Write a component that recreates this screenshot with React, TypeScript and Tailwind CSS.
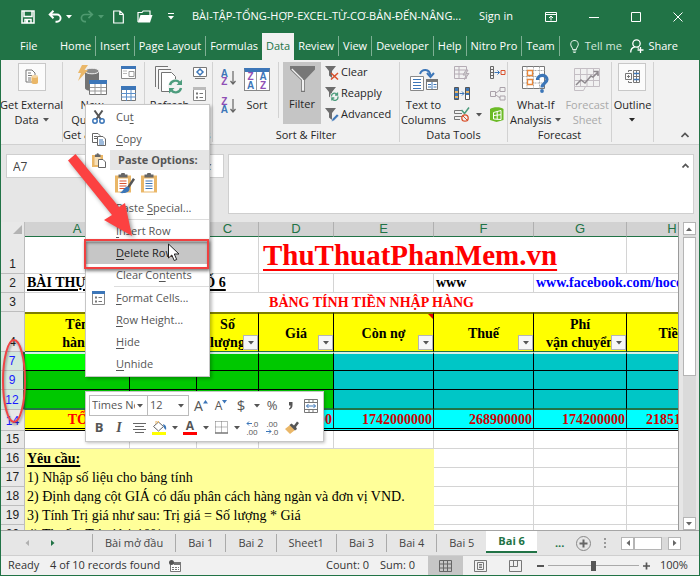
import React from 'react';
import clsx from 'clsx';

const CaretDown = ({ className = 'text-[#555]' }: { className?: string }) => (
  <svg width="6" height="4" viewBox="0 0 6 4" className={clsx('shrink-0', className)}>
    <path d="M0 0h6L3 3.5z" fill="currentColor" />
  </svg>
);

const Underlined = ({ text, at }: { text: string; at: number }) => (
  <span>
    {text.slice(0, at)}
    <span className="underline underline-offset-2">{text[at]}</span>
    {text.slice(at + 1)}
  </span>
);

/* ---------- Title bar ---------- */

const TitleBar = () => (
  <header className="flex h-[31px] shrink-0 items-center pl-5 text-[11px] text-white">
    <div className="flex w-[171px] shrink-0 items-center">
      <button aria-label="Save" className="w-[27px]">
        <svg width="14" height="14" viewBox="0 0 14 14" fill="none" stroke="currentColor" strokeWidth="1.5">
          <path d="M1 1h12v12H1zM3 1v5.5h8V1M4 13V9.500h6V13" />
          <path d="M5 10h2v3H5z" fill="currentColor" stroke="none" />
        </svg>
      </button>
      <button aria-label="Undo" className="flex w-8 items-center gap-1">
        <svg width="14" height="13" viewBox="0 0 14 13" fill="none" stroke="currentColor" strokeWidth="1.9">
          <path d="M1.500 4.500H9a3.600 3.600 0 0 1 0 7.200H7.500M5.500 .8 1.700 4.500l3.800 3.700" />
        </svg>
        <CaretDown className="text-white" />
      </button>
      <button aria-label="Redo" className="flex w-[33px] items-center gap-1 text-[#4f9a70]">
        <svg width="14" height="13" viewBox="0 0 14 13" fill="none" stroke="currentColor" strokeWidth="1.700">
          <path d="M12.500 4.500H5a3.600 3.600 0 0 0 0 7.200h1M8.500 .8l3.800 3.700-3.800 3.700" />
        </svg>
        <CaretDown className="text-[#4f9a70]" />
      </button>
      <button aria-label="New" className="w-6">
        <svg width="11" height="14" viewBox="0 0 11 14" fill="none" stroke="currentColor" strokeWidth="1.200">
          <path d="M.7 1H7l3.300 3.300V13H.7zM6.800 1v3.500h3.500" />
        </svg>
      </button>
      <button aria-label="Open" className="w-[31px]">
        <svg width="16" height="13" viewBox="0 0 16 13">
          <path d="M1 12V2.500h4l1.200-1.500H13v4" fill="none" stroke="currentColor" strokeWidth="1.200" />
          <path d="M3.500 5h12L13 12.500H.8z" fill="currentColor" />
        </svg>
      </button>
      <button aria-label="Customize Quick Access Toolbar">
        <svg width="6" height="7" viewBox="0 0 6 7" fill="currentColor">
          <path d="M0 0h6v1H0zM0 3h6L3 6.500z" />
        </svg>
      </button>
    </div>
    <h1 className="min-w-0 flex-1 whitespace-nowrap">BÀI-TẬP-TỔNG-HỢP-EXCEL-TỪ-CƠ-BẢN-ĐẾN-NÂNG...</h1>
    <button className="w-[66px] shrink-0 text-left">Sign in</button>
    <div className="flex w-[154px] shrink-0 items-center justify-between pr-4">
      <button aria-label="Ribbon Display Options">
        <svg width="12" height="10" viewBox="0 0 12 10" fill="none" stroke="currentColor">
          <path d="M.5.5h11v9H.5zM.5 2.500h11M6 8.500V4M4 6l2-2 2 2" />
        </svg>
      </button>
      <button aria-label="Minimize">
        <svg width="10" height="10" viewBox="0 0 10 10" stroke="currentColor"><path d="M0 5.500h10" /></svg>
      </button>
      <button aria-label="Maximize">
        <svg width="10" height="10" viewBox="0 0 10 10" fill="none" stroke="currentColor"><path d="M.5.5h9v9h-9z" /></svg>
      </button>
      <button aria-label="Close">
        <svg width="10" height="10" viewBox="0 0 10 10" stroke="currentColor"><path d="m.5.5 9 9m0-9-9 9" /></svg>
      </button>
    </div>
  </header>
);

const ribbonTabs = ['Home', 'Insert', 'Page Layout', 'Formulas', 'Data', 'Review', 'View', 'Developer', 'Help', 'Nitro Pro', 'Team'];

const RibbonTabs = () => (
  <nav className="flex h-7 shrink-0 items-center text-[11px] text-white">
    <button className="w-[55px] shrink-0 pl-[19px] text-left">File</button>
    {ribbonTabs.map((tab) => (
      <button
        key={tab}
        className={clsx(
          'shrink-0 whitespace-nowrap px-1',
          tab === 'Data' ? 'mt-auto h-[27px] bg-[#f1f1f1] text-[#217346]' : 'h-5 border-[#7fb094]',
          tab !== 'Data' && tab !== 'Formulas' && 'border-r'
        )}
      >
        {tab}
      </button>
    ))}
    <button className="ml-2.5 flex shrink-0 items-center gap-1.5 text-[#d5e8dd]">
      <svg width="9" height="13" viewBox="0 0 9 13" fill="none" stroke="currentColor" strokeWidth="1.100">
        <path d="M2.800 9.500C2.800 7.500.7 6.800.7 4.300a3.800 3.800 0 0 1 7.600 0c0 2.500-2.100 3.200-2.100 5.200zM2.800 11h3.400M3.300 12.500h2.400" />
      </svg>
      Tell me
    </button>
    <button className="ml-auto mr-[21px] flex shrink-0 items-center gap-1">
      <svg width="14" height="14" viewBox="0 0 14 14" fill="none" stroke="currentColor" strokeWidth="1.300">
        <circle cx="6.500" cy="4.500" r="3.700" />
        <path d="M.7 13.500c0-3 1.500-5 4-5.500M7.500 8.500l1.500 1M10.500 8v6M7.500 11h6" />
      </svg>
      Share
    </button>
  </nav>
);

/* ---------- Ribbon icons ---------- */

const ExternalDataIcon = () => (
  <svg width="14" height="16" viewBox="0 0 14 16">
    <path d="M1 1h6l3 3v9H1z" fill="#fff" stroke="#777" />
    <path d="M3 4h3M3 6.500h4M3 9h3M3 11h3" stroke="#777" />
    <path d="M6.500 7.500v6c0 2 6.500 2 6.500 0v-6z" fill="#eab768" />
    <ellipse cx="9.750" cy="7.500" rx="3.250" ry="1.400" fill="#f5d6a3" />
  </svg>
);

const NewQueryIcon = () => (
  <svg width="30" height="30" viewBox="0 0 30 30">
    <path d="M8 6v17c0 4 14 4 14 0V6z" fill="#737373" />
    <ellipse cx="15" cy="6" rx="7" ry="2.800" fill="#8b8b8b" stroke="#f1f1f1" />
    <path d="M5 0h6L7.500 5H11L1 16l3-8H1z" fill="#eab768" />
    <path d="M12.500 15.500h17v14h-17z" fill="#fff" stroke="#777" />
    <path d="M12 15h18v4H12z" fill="#3c76b8" />
    <path d="M18 19v10.500M24 19v10.500M13 22.500h16M13 26h16" stroke="#999" />
  </svg>
);

const RefreshAllIcon = () => (
  <svg width="28" height="28" viewBox="0 0 28 28" fill="#f8f8f8" stroke="#737373">
    <path d="M.5 21V.5H13" />
    <path d="M3.500 23V3.500H16" />
    <path d="M6.500 25.500v-19h10l4 4v15z" fill="#fff" />
    <circle cx="20.500" cy="20.500" r="7.500" fill="#f1f1f1" stroke="none" />
    <path d="M15 19a5.500 5.500 0 0 1 9.500-2.500M26 22a5.500 5.500 0 0 1-9.500 2.500" fill="none" stroke="#4d9c7d" strokeWidth="2.400" />
    <path d="M27 13.500V19h-5.500zM14 27.500V22h5.500z" fill="#4d9c7d" stroke="none" />
  </svg>
);

const QueriesIcon = () => (
  <svg width="15" height="13" viewBox="0 0 15 13">
    <path d="M.5.5h14v12H.5z" fill="#fff" stroke="#888" />
    <path d="M0 0h15v3H0z" fill="#3c76b8" />
    <path d="M2 5h4M2 7.500h4" stroke="#bbb" />
    <path d="M8 5.500h5v5H8z" fill="#fff" stroke="#999" />
  </svg>
);

const FromTableIcon = () => (
  <svg width="15" height="15" viewBox="0 0 15 15">
    <path d="M.5.5h14v14H.5z" fill="#fff" stroke="#777" />
    <path d="M0 0h15v4H0z" fill="#3c76b8" />
    <path d="M5.500 4v11M10 4v11M0 7.500h15M0 11h15" stroke="#5b8fc9" />
  </svg>
);

const ConnectionsIcon = () => (
  <svg width="14" height="12" viewBox="0 0 14 12" fill="none" stroke="#777">
    <path d="M.5.5h13v9H.5zM2 11.500h10" fill="#fff" />
    <path d="m7 2 3 3-3 3-3-3z" stroke="#3c76b8" strokeWidth="1.500" />
  </svg>
);

const PropertiesIcon = ({ bar = '#888' }: { bar?: string }) => (
  <svg width="13" height="14" viewBox="0 0 13 14">
    <path d="M.5.5h12v13H.5z" fill="#fff" stroke="#888" />
    <path d="M0 0h13v3H0z" fill={bar} />
    <path d="M3 5.500h2v2H3zM3 9.500h2v2H3z" fill="#777" />
    <path d="M6.500 6.500H10M6.500 10.500H10" stroke="#777" />
  </svg>
);

// Small sort button: the two letters are text, only the arrow is drawn
const SortButton = ({ letters, label }: { letters: [string, string]; label: string }) => (
  <button aria-label={label} className="flex items-center gap-0.5 text-[10px] font-bold leading-[8px]">
    <span className="flex flex-col font-['Liberation_Sans',sans-serif]">
      <span className={letters[0] === 'A' ? 'text-[#3c76b8]' : 'text-[#8f4fb5]'}>{letters[0]}</span>
      <span className={letters[1] === 'A' ? 'text-[#3c76b8]' : 'text-[#8f4fb5]'}>{letters[1]}</span>
    </span>
    <svg width="6" height="14" viewBox="0 0 6 14" fill="none" stroke="#666" strokeWidth="1.200">
      <path d="M3 0v13M.5 10 3 13l2.500-3" />
    </svg>
  </button>
);

const Funnel = ({ children }: { children: React.ReactNode }) => (
  <svg width="14" height="14" viewBox="0 0 14 14">
    <path d="M0 0h11L7 5v7L4 9.500V5z" fill="#6d6d6d" />
    {children}
  </svg>
);

const FilterIcon = () => (
  <svg width="25" height="26" viewBox="0 0 25 26">
    <path d="M0 0h25v3.500L15 14v12h-4V14L0 3.500z" fill="#777" />
    <path d="M1.800 3 12.500 13.500V24h1V14" fill="none" stroke="#f1f1f1" strokeWidth="1.300" />
  </svg>
);

const TextToColumnsIcon = () => (
  <svg width="28" height="24" viewBox="0 0 28 24">
    <path d="M.5 8.500h13v14H.5z" fill="#fff" stroke="#888" />
    <path d="M3 11.500h8M3 14.500h8M3 17.500h8M3 20.500h8" stroke="#3c76b8" />
    <path d="M16.500 11.500h11v10h-11z" fill="#fff" stroke="#777" />
    <path d="M16 11h12v3H16z" fill="#777" />
    <path d="M22 14v7M18 16.500h3M18 19h3M23.500 16.500h3M23.500 19h3" stroke="#3c76b8" />
    <path d="M10 6c2-5.500 9.500-5.500 10.500 1.500" fill="none" stroke="#3c76b8" strokeWidth="2" />
    <path d="m17 5 3.500 4L24 5" fill="none" stroke="#3c76b8" strokeWidth="2" />
  </svg>
);

const FlashFillIcon = () => (
  <svg width="16" height="14" viewBox="0 0 16 14" fill="none" stroke="#b5acb5">
    <path d="M.5.5h12v12H.5zM.5 4h12M.5 8h12M5 .5v12" />
    <path d="m12 4-3 5h3l-1.500 4.500L15 7.500h-3L14 4z" fill="#ccc" />
  </svg>
);

const RemoveDuplicatesIcon = () => (
  <svg width="16" height="13" viewBox="0 0 16 13">
    <path d="M.5.5h4v12h-4zM11.500.5h4v12h-4z" fill="#3c76b8" stroke="#555" />
    <path d="M1 4h3v2H1zM1 9h3v2H1zM12 4h3v2h-3z" fill="#eab768" />
    <path d="M12 8h3v4h-3z" fill="#fff" />
    <path d="M5.500 6.500H10M8 4.500l2 2-2 2" fill="none" stroke="#3c76b8" />
  </svg>
);

const ValidationIcon = () => (
  <svg width="16" height="15" viewBox="0 0 16 15" fill="none" stroke="#777">
    <path d="M8 3.500H.5v3H8M8 9.500H.5v3H6" />
    <path d="m7.500 3 3 3.500L15 .5" stroke="#4d9c7d" strokeWidth="1.500" />
    <circle cx="11" cy="11" r="3.200" stroke="#d9512c" strokeWidth="1.300" />
    <path d="m9 9 4 4" stroke="#d9512c" />
  </svg>
);

const ConsolidateIcon = () => (
  <svg width="16" height="13" viewBox="0 0 16 13" fill="none" stroke="#666">
    <path d="M.5.5h3v12h-3zM.5 3.500h3M.5 6.500h3M.5 9.500h3" />
    <path d="M4.500 6.500h5M7.500 4.500l2 2-2 2" stroke="#3c76b8" />
    <path d="M11 4.500h4v4h-4z" stroke="#d9512c" />
  </svg>
);

const RelationshipsIcon = () => (
  <svg width="16" height="14" viewBox="0 0 16 14" fill="none" stroke="#aaa2aa">
    <path d="M.5 4.500h5v5h-5zM10 .5h5v4h-5zM10 9h5v4h-5zM6 6l4-3M6 8l4 3" />
  </svg>
);

const DataModelIcon = () => (
  <svg width="14" height="15" viewBox="0 0 14 15">
    <path d="M0 2c3-2.500 11-2.500 13.500 0v11l-7 2L0 13z" fill="#6cbb27" />
    <path d="M3.500 5.500 11 3.500v9l-7.500-.5zM3.500 8.500l7.500-.8M7.200 4.500v8" fill="none" stroke="#fff" />
  </svg>
);

const WhatIfIcon = () => (
  <svg width="27" height="27" viewBox="0 0 27 27">
    <path d="M.5.5h22v22H.5z" fill="#fff" stroke="#777" />
    <path d="M5 .5v22M11.500 .5v22M17.500 .5v22M.5 4.500h22M.5 10.500h22M.5 17h22" stroke="#aaa" strokeDasharray="2 1" />
    <path d="M5.500 4.500h5v5h-5zM5.500 13.500h5v5h-5z" fill="#fff" stroke="#e8873a" strokeWidth="1.300" />
    <path d="M15.500 14c0-6 9.500-6 9.500-.5 0 3.500-5 3.500-5 8" fill="none" stroke="#3c76b8" strokeWidth="3.200" />
    <circle cx="20" cy="25" r="1.900" fill="#3c76b8" />
  </svg>
);

const ForecastIcon = () => (
  <svg width="26" height="24" viewBox="0 0 26 24" fill="none" stroke="#c4bec4">
    <path d="M.5.5h25v18H.5zM6.500 .5v18M13 .5v18M19.500 .5v18M.5 6.500h25M.5 12.500h25M.5 18.500v4h9l2-4" />
    <path d="M2 17l5-5 4 3 6-7 2 1 5-5M19.500 3.500H24V8" stroke="#8e898e" strokeWidth="1.500" />
  </svg>
);

const OutlineIcon = () => (
  <svg width="15" height="13" viewBox="0 0 15 13" fill="none" stroke="#777">
    <path d="M.5 3.500h6v6h-6zM2 6.500h3M3.500 5v3M3.500 2V.5H7M3.500 11v1.500H7" />
    <path d="M8.500.5h6v12h-6zM11.500 .5v12M8.500 6.500h6" fill="#fff" />
    <path d="M9 3.500h5M9 9.500h5" stroke="#3c76b8" strokeWidth="1.500" />
  </svg>
);

/* ---------- Ribbon ---------- */

interface GroupProps {
  label?: string;
  className: string;
  children: React.ReactNode;
}

const Group = ({ label, className, children }: GroupProps) => (
  <section className={clsx('flex shrink-0 flex-col border-r border-[#d2d2d2]', className)}>
    <div className="flex flex-1 justify-center">{children}</div>
    {label && <div className="whitespace-nowrap text-center leading-[14px]">{label}</div>}
  </section>
);

const BigButton = ({ icon, lines, caret, className }: { icon: React.ReactNode; lines: string[]; caret?: boolean; className?: string }) => (
  <button className={clsx('flex flex-col items-center whitespace-nowrap leading-[15px]', className)}>
    <span className="flex h-[35px] items-center">{icon}</span>
    {lines.map((line, i) => (
      <span key={line} className="flex items-center gap-1">
        {line}
        {caret && i === lines.length - 1 && <CaretDown />}
      </span>
    ))}
  </button>
);

const FramedIcon = ({ children }: { children: React.ReactNode }) => (
  <span className="mb-1.5 flex size-7 items-center justify-center border border-[#c8c8c8] bg-[#fbfbfb]">{children}</span>
);

const SmallColumn = ({ children }: { children: React.ReactNode }) => (
  <div className="flex flex-col [&>*]:h-[21px]">{children}</div>
);

const IconButton = ({ label, children }: { label: string; children: React.ReactNode }) => (
  <button aria-label={label} className="flex items-center gap-1.5">{children}</button>
);

const Ribbon = () => (
  <div className="flex h-[84px] shrink-0 bg-[#f1f1f1] py-0.5 text-[11px] text-[#262626]">
    <Group className="w-[62px]">
      <BigButton icon={<FramedIcon><ExternalDataIcon /></FramedIcon>} lines={['Get External', 'Data']} caret />
    </Group>
    <Group label="Get & Transform" className="w-[82px]">
      <BigButton icon={<NewQueryIcon />} lines={['New', 'Query']} caret className="mr-2" />
      <SmallColumn>
        <IconButton label="Show Queries"><QueriesIcon /></IconButton>
        <IconButton label="From Table"><FromTableIcon /></IconButton>
      </SmallColumn>
    </Group>
    <Group label="Connections" className="w-[68px]">
      <BigButton icon={<RefreshAllIcon />} lines={['Refresh', 'All']} caret className="mr-1" />
      <SmallColumn>
        <IconButton label="Connections"><ConnectionsIcon /></IconButton>
        <IconButton label="Properties"><PropertiesIcon bar="#bbb" /></IconButton>
      </SmallColumn>
    </Group>
    <Group label="Sort & Filter" className="w-[187px]">
      <div className="flex flex-col gap-3 pt-2">
        <SortButton letters={['A', 'Z']} label="Sort A to Z" />
        <SortButton letters={['Z', 'A']} label="Sort Z to A" />
      </div>
      <BigButton
        className="px-2"
        icon={
          <span className="grid w-[26px] grid-cols-2 border border-t-4 border-[#888] border-t-[#3c76b8] bg-white text-center font-['Liberation_Sans',sans-serif] text-[10px] font-bold leading-[9px]">
            <span className="border-r border-[#999] text-[#8f4fb5]">Z</span>
            <span className="text-[#3c76b8]">A</span>
            <span className="border-r border-[#999] text-[#3c76b8]">A</span>
            <span className="text-[#8f4fb5]">Z</span>
          </span>
        }
        lines={['Sort']}
      />
      <div className="mr-1 h-14 border-l border-[#d2d2d2]" />
      <button aria-pressed="true" className="flex h-[62px] w-[38px] flex-col items-center bg-[#c5c5c5]">
        <span className="flex h-[34px] items-center"><FilterIcon /></span>
        <span className="leading-[15px]">Filter</span>
      </button>
      <div className="ml-1 flex flex-col [&>button]:flex [&>button]:h-[21px] [&>button]:items-center [&>button]:gap-0.5">
        <button>
          <Funnel><path d="m6 7 7 6.500M13 7l-7 6.500" stroke="#d9512c" strokeWidth="1.500" /></Funnel>
          Clear
        </button>
        <button>
          <Funnel>
            <circle cx="9.500" cy="9.500" r="4.500" fill="#f1f1f1" />
            <path d="M6.500 9.500a3 3 0 0 1 5.500-2M12.800 9.500a3 3 0 0 1-5.500 2.300M12.500 5.500v2.500H10M6.800 13.500V11h2.500" fill="none" stroke="#4d9c7d" strokeWidth="1.300" />
          </Funnel>
          Reapply
        </button>
        <button>
          <Funnel><path d="m6.500 13.500.7-2.500 4.800-5 1.800 1.800-5 5z" fill="#3c76b8" stroke="#f1f1f1" strokeWidth=".5" /></Funnel>
          Advanced
        </button>
      </div>
    </Group>
    <Group label="Data Tools" className="w-[108px]">
      <BigButton icon={<TextToColumnsIcon />} lines={['Text to', 'Columns']} className="mr-2" />
      <div className="flex gap-2">
        <SmallColumn>
          <IconButton label="Flash Fill"><FlashFillIcon /></IconButton>
          <IconButton label="Remove Duplicates"><RemoveDuplicatesIcon /></IconButton>
          <IconButton label="Data Validation"><ValidationIcon /><CaretDown /></IconButton>
        </SmallColumn>
        <SmallColumn>
          <IconButton label="Consolidate"><ConsolidateIcon /></IconButton>
          <IconButton label="Relationships"><RelationshipsIcon /></IconButton>
          <IconButton label="Manage Data Model"><DataModelIcon /></IconButton>
        </SmallColumn>
      </div>
    </Group>
    <Group label="Forecast" className="w-[104px]">
      <BigButton icon={<WhatIfIcon />} lines={['What-If', 'Analysis']} caret className="mr-1" />
      <BigButton icon={<ForecastIcon />} lines={['Forecast', 'Sheet']} className="text-[#aaa]" />
    </Group>
    <Group className="w-[42px]">
      <button className="flex flex-col items-center leading-[15px]">
        <span className="flex h-[35px] items-center"><FramedIcon><OutlineIcon /></FramedIcon></span>
        Outline
        <CaretDown className="mt-1.5" />
      </button>
    </Group>
    <button aria-label="Collapse the Ribbon" className="ml-auto mr-2.5 self-end pb-1">
      <svg width="8" height="6" viewBox="0 0 8 6" fill="none" stroke="#555" strokeWidth="1.700"><path d="M.5 5 4 1.500 7.500 5" /></svg>
    </button>
  </div>
);

const FormulaBar = () => (
  <div className="flex h-[78px] shrink-0 items-start gap-1 border-t border-[#d0d0d0] bg-[#e6e6e6] px-[5px] pt-[9px]">
    <input aria-label="Name Box" defaultValue="A7" className="h-6 w-[88px] border border-[#cfcfcf] bg-white px-1.5 text-xs text-[#444]" />
    <div className="flex h-6 w-[126px] items-center justify-end border border-[#cfcfcf] bg-white pr-3">
      <button aria-label="Insert Function" className="font-['Liberation_Serif',serif] text-xs italic text-[#444]">fx</button>
    </div>
    <div className="flex h-[60px] flex-1 border border-[#cfcfcf] bg-white">
      <textarea aria-label="Formula Bar" className="flex-1 resize-none outline-none" />
      <button aria-label="Collapse Formula Bar" className="self-start px-1 pt-2">
        <svg width="7" height="5" viewBox="0 0 7 5" fill="none" stroke="#555" strokeWidth="1.700"><path d="m.5 4.500 3-3 3 3" /></svg>
      </button>
    </div>
  </div>
);

/* ---------- Worksheet ---------- */

const RowHead = ({ n, selected, filtered, className }: { n: number; selected?: boolean; filtered?: boolean; className: string }) => (
  <th
    scope="row"
    className={clsx(
      "border-b border-r border-[#bdbdbd] p-0 text-center align-bottom font-['Liberation_Sans',sans-serif] text-xs font-normal leading-[17px]",
      selected ? 'border-r-2 border-r-[#217346] bg-[#d3e8dd]' : 'bg-[#e8e8e8]',
      filtered ? 'text-[#1a1aff]' : 'text-[#222]',
      className
    )}
  >
    {n}
  </th>
);

const headerCells = [
  ['Tên', 'hàng'],
  ['Đơn vị', 'tính'],
  ['Số', 'lượng'],
  ['Giá'],
  ['Còn nợ'],
  ['Thuế'],
  ['Phí', 'vận chuyển'],
  ['Tiền'],
];

const FilterButton = () => (
  <button aria-label="Filter" className="absolute bottom-px right-0 flex size-[15px] items-center justify-center border border-[#b5b5b5] bg-[#f6f6f6]">
    <CaretDown />
  </button>
);

const dataRows = [
  { n: 7, height: 'h-[19px]' },
  { n: 9, height: 'h-[19px]' },
  { n: 12, height: 'h-5' },
];

const notes = [
  '1) Nhập số liệu cho bảng tính',
  '2) Định dạng cột GIÁ có dấu phân cách hàng ngàn và đơn vị VND.',
  '3) Tính Trị giá như sau: Trị giá = Số lượng * Giá',
  '4) Thuế = Trị giá * 10%',
];

const cell = 'border-b border-r border-[#d4d4d4] p-0 whitespace-nowrap';
const total = 'bg-[#00ffff] shadow-[inset_-1px_0_#222]';

const EmptyCells = ({ count }: { count: number }) => (
  <>
    {Array.from({ length: count }, (_, i) => (
      <td key={i} className={cell} />
    ))}
  </>
);

const Sheet = () => (
  <div className="min-w-0 flex-1 overflow-hidden border-r border-[#9a9a9a] bg-white">
    <table className="w-full min-w-[717px] table-fixed border-separate border-spacing-0 font-['Liberation_Serif',serif] text-sm leading-[18px] text-black">
      <colgroup>
        <col className="w-6" />
        <col className="w-[105px]" />
        <col className="w-[67px]" />
        <col className="w-[62px]" />
        <col className="w-[75px]" />
        <col className="w-[100px]" />
        <col className="w-[100px]" />
        <col className="w-[93px]" />
        <col />
      </colgroup>
      <thead>
        <tr className="h-[15px]">
          <td className="border-r border-[#bdbdbd] bg-[#e8e8e8] p-0">
            <svg width="9" height="9" viewBox="0 0 9 9" className="ml-auto mr-0.5"><path d="M9 0v9H0z" fill="#b3b3b3" /></svg>
          </td>
          {['A', 'B', 'C', 'D', 'E', 'F', 'G', 'H'].map((letter) => (
            <th
              key={letter}
              scope="col"
              className="h-[15px] border-b border-r border-b-[#217346] border-r-[#b0b0b0] bg-[#d2d2d2] p-0 font-['Liberation_Sans',sans-serif] text-[13px] font-normal leading-[14px] text-[#217346]"
            >
              {letter}
            </th>
          ))}
        </tr>
      </thead>
      <tbody>
        <tr>
          <RowHead n={1} className="h-[37px]" />
          <td className={cell} colSpan={3} />
          <td className={clsx(cell, 'px-1 text-[29px] font-bold leading-[32px] text-[#ff0000] underline decoration-2 underline-offset-4')} colSpan={4}>
            ThuThuatPhanMem.vn
          </td>
          <td className={cell} />
        </tr>
        <tr>
          <RowHead n={2} className="h-[19px]" />
          <td className={clsx(cell, 'pl-0.5 font-bold underline decoration-2 underline-offset-2')} colSpan={3}>BÀI THỰC HÀNH EXCEL SỐ 6</td>
          <EmptyCells count={2} />
          <td className={clsx(cell, 'pl-0.5 font-bold')}>www</td>
          <td className={clsx(cell, 'pl-0.5 font-bold')} colSpan={2}>
            <a href="#facebook" className="text-[#0000ff]">www.facebook.com/hocexcel</a>
          </td>
        </tr>
        <tr>
          <RowHead n={3} className="h-[19px]" />
          <td className="p-0 text-center font-bold text-[#ff0000]" colSpan={8}>BẢNG TÍNH TIỀN NHẬP HÀNG</td>
        </tr>
        <tr>
          <RowHead n={4} className="h-10" />
          {headerCells.map((lines, i) => (
            <th
              key={lines.join(' ')}
              scope="col"
              className="relative overflow-hidden border-b border-r border-t-2 border-black border-b-[#217346] border-t-[#7f7f00] bg-[#ffff00] p-0 align-middle font-bold leading-[19px]"
            >
              {lines.map((line) => (
                <div key={line} className="h-[18px] whitespace-nowrap">{line}</div>
              ))}
              {i === 4 && (
                <svg width="5" height="5" viewBox="0 0 5 5" className="absolute right-0 top-0"><path d="M0 0h5v5z" fill="#e00000" /></svg>
              )}
              <FilterButton />
            </th>
          ))}
        </tr>
        {dataRows.map((row) => (
          <tr key={row.n}>
            <RowHead n={row.n} selected filtered className={row.height} />
            {headerCells.map((_, i) => (
              <td
                key={i}
                className={clsx(
                  'border-b border-r border-black p-0',
                  row.n === 7 && 'border-t-2 border-t-[#d8f0e4]',
                  row.n === 12 && 'border-b-2 border-b-[#217346]',
                  i > 3 ? 'bg-[#00c6c6]' : i === 0 && row.n === 7 ? 'bg-[#00ff00]' : 'bg-[#00c800]'
                )}
              />
            ))}
          </tr>
        ))}
        <tr className="font-bold text-[#d00000] [&>td]:border-b-[3px] [&>td]:border-double [&>td]:border-black [&>td]:p-0 [&>td]:px-0.5 [&>td]:text-right [&>td]:leading-[17px]">
          <RowHead n={14} filtered className="h-[21px]" />
          <td className="bg-[#ffff00]" colSpan={2}><div className="text-center text-[#ff0000]">TỔNG CỘNG</div></td>
          <td className="bg-[#00ffff]" />
          <td className={total}>174200000</td>
          <td className={total}>1742000000</td>
          <td className={total}>268900000</td>
          <td className={total}>174200000</td>
          <td className={total}>2185100000</td>
        </tr>
        <tr>
          <RowHead n={15} className="h-[18px]" />
          <EmptyCells count={8} />
        </tr>
        <tr>
          <RowHead n={16} className="h-[19px]" />
          <td className="bg-[#ffff99] p-0 pl-0.5 font-bold underline decoration-2 underline-offset-2" colSpan={5}>Yêu cầu:</td>
          <EmptyCells count={3} />
        </tr>
        {notes.map((note, i) => (
          <tr key={note}>
            <RowHead n={17 + i} className="h-[19px]" />
            <td className="whitespace-nowrap bg-[#ffff99] p-0 pl-0.5" colSpan={5}>{note}</td>
            <EmptyCells count={3} />
          </tr>
        ))}
      </tbody>
    </table>
  </div>
);

const ScrollArrow = ({ label, rotate }: { label: string; rotate: string }) => (
  <button aria-label={label} className="flex size-[13px] shrink-0 items-center justify-center border border-[#b5b5b5] bg-white">
    <CaretDown className={clsx('text-[#666]', rotate)} />
  </button>
);

const VerticalScroll = () => (
  <div className="flex w-5 shrink-0 flex-col items-center bg-[#e6e6e6]">
    <ScrollArrow label="Scroll up" rotate="rotate-180" />
    <div className="w-[13px] flex-1 bg-[#dadada] pt-0.5">
      <div className="h-[139px] border border-[#b5b5b5] bg-white" />
    </div>
    <ScrollArrow label="Scroll down" rotate="rotate-0" />
  </div>
);

/* ---------- Bottom bars ---------- */

const sheetTabs = ['Bài mở đầu', 'Bai 1', 'Bai 2', 'Sheet1', 'Bai 3', 'Bai 4', 'Bai 5', 'Bai 6'];

const SheetTabs = () => (
  <div className="flex h-[25px] shrink-0 items-center border-t border-[#a5a5a5] bg-[#e6e6e6] text-[11px] text-[#444]">
    <div className="flex w-[91px] shrink-0 items-center gap-5 pl-[23px]">
      <button aria-label="Previous sheets"><CaretDown className="rotate-90 text-[#b0b0b0]" /></button>
      <button aria-label="Next sheets"><CaretDown className="-rotate-90 text-[#217346]" /></button>
    </div>
    <div className="h-[18px] border-l border-[#aaa]" />
    {sheetTabs.map((tab) => (
      <button
        key={tab}
        className={clsx(
          'shrink-0 whitespace-nowrap px-3',
          tab === 'Bai 6' ? 'h-[22px] self-start border-b-2 border-[#217346] bg-white font-bold text-[#217346]' : 'h-[18px] border-[#aaa]',
          tab !== 'Bai 6' && tab !== 'Bai 5' && 'border-r'
        )}
      >
        {tab}
      </button>
    ))}
    <button aria-label="More sheets" className="ml-[18px] font-bold text-[#217346]">...</button>
    <button aria-label="New sheet" className="ml-3">
      <svg width="15" height="15" viewBox="0 0 15 15" fill="none" stroke="#888">
        <circle cx="7.500" cy="7.500" r="7" />
        <path d="M7.500 3.500v8M3.500 7.500h8" stroke="#666" strokeWidth="2" />
      </svg>
    </button>
    <div className="ml-auto flex w-[95px] shrink-0 items-center">
      <svg width="3" height="11" viewBox="0 0 3 11" fill="#999" className="mr-3.5"><path d="M0 0h2v2H0zM0 4h2v2H0zM0 8h2v2H0z" /></svg>
      <ScrollArrow label="Scroll left" rotate="rotate-90" />
      <div className="flex w-[34px] bg-[#dadada]"><div className="h-[13px] w-7 border border-[#b5b5b5] bg-white" /></div>
      <ScrollArrow label="Scroll right" rotate="-rotate-90" />
    </div>
  </div>
);

const StatusBar = () => (
  <footer className="flex h-5 shrink-0 items-center border-t border-[#cfcfcf] bg-[#f1f1f1] pl-[7px] text-[11px] text-[#333]">
    <span className="w-[42px] shrink-0">Ready</span>
    <span className="w-[119px] shrink-0 whitespace-nowrap">4 of 10 records found</span>
    <button aria-label="Record Macro">
      <svg width="12" height="12" viewBox="0 0 12 12">
        <path d="M1.500 3.500h10v8h-10z" fill="#fff" stroke="#777" />
        <path d="M5 2h7v3H5z" fill="#777" />
        <path d="M3 7.500h7M3 9.500h7" stroke="#777" strokeDasharray="2 1" />
        <circle cx="2.500" cy="2.500" r="2.500" fill="#555" />
      </svg>
    </button>
    <div className="ml-auto flex h-full shrink-0 items-center">
      <span className="w-[54px] whitespace-nowrap">Count: 0</span>
      <span className="w-12 whitespace-nowrap">Sum: 0</span>
      <button aria-label="Normal view" className="flex h-full w-[35px] items-center justify-center bg-[#c6c6c6]">
        <svg width="13" height="12" viewBox="0 0 13 12" fill="none" stroke="#666"><path d="M.5.5h12v11H.5zM4.500 .5v11M8.500 .5v11M.5 4h12M.5 8h12" /></svg>
      </button>
      <button aria-label="Page Layout view" className="flex w-[35px] justify-center">
        <svg width="13" height="12" viewBox="0 0 13 12" fill="none" stroke="#777"><path d="M.5.5h12v11H.5zM3.500 2.500h6v7h-6zM5 4.500h3M5 6h3M5 7.500h3" /></svg>
      </button>
      <button aria-label="Page Break Preview" className="flex w-[35px] justify-center">
        <svg width="13" height="12" viewBox="0 0 13 12" fill="none" stroke="#777"><path d="M.5.5h12v11H.5zM4.500 .5v6M.5 6.500h8M8.500 .5v6" /></svg>
      </button>
      <button aria-label="Zoom out" className="ml-1">
        <svg width="7" height="8" viewBox="0 0 7 8" stroke="#555" strokeWidth="2"><path d="M0 4h7" /></svg>
      </button>
      <input
        type="range"
        aria-label="Zoom"
        className="mx-1 h-3 w-[91px] appearance-none bg-[linear-gradient(#aaa,#aaa)] bg-[length:100%_1px] bg-center bg-no-repeat [&::-webkit-slider-thumb]:h-2.5 [&::-webkit-slider-thumb]:w-[5px] [&::-webkit-slider-thumb]:appearance-none [&::-webkit-slider-thumb]:bg-[#555]"
      />
      <button aria-label="Zoom in">
        <svg width="7" height="8" viewBox="0 0 7 8" stroke="#555" strokeWidth="1.700"><path d="M0 4h7M3.500 .5v7" /></svg>
      </button>
      <span className="ml-2.5 w-[39px]">100%</span>
    </div>
  </footer>
);

/* ---------- Context menu ---------- */

const PasteIcon = ({ lines = '#3c76b8', brush }: { lines?: string; brush?: boolean }) => (
  <svg width="20" height="21" viewBox="0 0 20 21">
    <path d="M0 2.500h16v17H0z" fill="#eab768" />
    <path d="M3 5.500h10v13H3z" fill="#fff" />
    <path d="M3.500 1.500H6a2 2 0 0 1 4 0h2.500v3h-9z" fill="#666" />
    <path d="M4.500 8h7M4.500 10.500h7M4.500 13h7M4.500 15.500h7" stroke={lines} />
    {brush && (
      <>
        <path d="m12 14 6-9 2 1.500-6 9z" fill="#555" />
        <path d="M12 13.500c2 .5 3 1.500 2.500 3-1 3.500-5.500 4-10 3.500 3-1 4-5 7.500-6.500z" fill="#3c76b8" />
      </>
    )}
  </svg>
);

const CutIcon = () => (
  <svg width="13" height="14" viewBox="0 0 13 14" fill="none" strokeWidth="1.500">
    <path d="M2.500.5 9 9.500M10.500.5 4 9.500" stroke="#555" strokeWidth="2" />
    <circle cx="3" cy="11" r="2.200" stroke="#3c76b8" />
    <circle cx="10" cy="11" r="2.200" stroke="#3c76b8" />
  </svg>
);

const CopyIcon = () => (
  <svg width="14" height="13" viewBox="0 0 14 13" fill="#fff" stroke="#666">
    <path d="M.5.5H6l2 2v7H.5zM2 3.500h3M2 5.500h3" />
    <path d="M5.500 3.500H11l2.500 2.500v6.500h-8z" />
    <path d="M7 7h4M7 9h5M7 11h5" stroke="#3c76b8" />
  </svg>
);

const ClipboardIcon = () => (
  <svg width="14" height="15" viewBox="0 0 14 15">
    <path d="M0 2h11v12H0z" fill="#eab768" />
    <path d="M2.500 4h6v8h-6z" fill="#f6dfb8" />
    <path d="M3 1.500h1.500a1.200 1.200 0 0 1 2.400 0H8.500V4H3z" fill="#666" />
    <path d="M6.500 6.500H11L13.500 9v5.500h-7z" fill="#fff" stroke="#666" />
  </svg>
);

interface MenuItemProps {
  text: string;
  at: number;
  icon?: React.ReactNode;
  active?: boolean;
}

const MenuItem = ({ text, at, icon, active }: MenuItemProps) => (
  <button
    role="menuitem"
    className={clsx('flex h-[22px] w-full items-center whitespace-nowrap', active && 'bg-[#c6c6c6] text-[#222]')}
  >
    <span className="flex w-[30px] shrink-0 items-center pl-1.5">{icon}</span>
    <Underlined text={text} at={at} />
  </button>
);

const ContextMenu = () => (
  <div
    role="menu"
    className="absolute left-[84px] top-[103px] w-[125px] border border-[#c6c6c6] bg-white py-px text-[11px] text-[#555] shadow-[2px_2px_3px_rgba(0,0,0,0.25)]"
  >
    <MenuItem text="Cut" at={2} icon={<CutIcon />} />
    <MenuItem text="Copy" at={0} icon={<CopyIcon />} />
    <div className="flex h-5 items-center">
      <span className="w-6 shrink-0 pl-1.5"><ClipboardIcon /></span>
      <span className="h-full flex-1 bg-[#e5e5e5] pl-2 font-bold leading-5">Paste Options:</span>
    </div>
    <div className="flex h-[27px] items-center gap-1.5 pl-[29px]">
      <button aria-label="Paste"><PasteIcon lines="#d9512c" brush /></button>
      <button aria-label="Paste values"><PasteIcon /></button>
    </div>
    <MenuItem text="Paste Special..." at={6} />
    <div className="ml-7 h-px bg-[#ddd]" />
    <MenuItem text="Insert Row" at={0} />
    <MenuItem text="Delete Row" at={0} active />
    <MenuItem text="Clear Contents" at={8} />
    <div className="ml-7 h-px bg-[#ddd]" />
    <MenuItem text="Format Cells..." at={0} icon={<PropertiesIcon bar="#3c76b8" />} />
    <MenuItem text="Row Height..." at={0} />
    <MenuItem text="Hide" at={0} />
    <MenuItem text="Unhide" at={0} />
  </div>
);

const toolButton = 'flex w-5 shrink-0 items-center justify-center';
const caretButton = 'flex w-[11px] shrink-0 items-center justify-center';

const Picker = ({ label, value, className }: { label: string; value: string; className: string }) => (
  <span className={clsx('relative flex h-[21px] items-center border border-[#bbb] bg-white', className)}>
    <select aria-label={label} className="w-full appearance-none pl-0.5 pr-3 text-[11px] outline-none">
      <option>{value}</option>
    </select>
    <CaretDown className="pointer-events-none absolute right-1 text-[#555]" />
  </span>
);

const MiniToolbar = () => (
  <div className="absolute left-[84px] top-[390px] flex w-[239px] flex-col gap-px border border-[#c6c6c6] bg-white px-[3px] py-[3px] text-[#555] shadow-[1px_1px_3px_rgba(0,0,0,0.25)]">
    <div className="flex h-[21px] items-center">
      <Picker label="Font" value="Times New Roman" className="w-[59px]" />
      <Picker label="Font size" value="12" className="-ml-px w-[42px]" />
      <button aria-label="Increase font size" className={clsx(toolButton, 'ml-0.5 text-sm')}>
        A<svg width="5" height="4" viewBox="0 0 5 4" className="mb-2"><path d="M0 3.500h5L2.500 0z" fill="#3c76b8" /></svg>
      </button>
      <button aria-label="Decrease font size" className={clsx(toolButton, 'text-xs')}>
        A<svg width="5" height="4" viewBox="0 0 5 4" className="mb-2"><path d="M0 0h5L2.500 3.500z" fill="#3c76b8" /></svg>
      </button>
      <button aria-label="Accounting format" className={clsx(toolButton, 'text-[15px]')}>$</button>
      <button aria-label="Accounting options" className={caretButton}><CaretDown /></button>
      <button aria-label="Percent style" className="w-5 text-center text-[13px]">%</button>
      <button aria-label="Comma style" className="w-4">
        <svg width="5" height="8" viewBox="0 0 5 8" className="mx-auto"><path d="M1 0h3.500v3C4.500 5.500 3.500 7 1 7.500V6.500C2.200 6 2.500 5 2.500 3.500H1z" fill="#555" /></svg>
      </button>
      <button aria-label="Merge and center" className="ml-1.5">
        <svg width="14" height="14" viewBox="0 0 14 14" fill="none" stroke="#777">
          <path d="M.5.5h13v13H.5zM.5 3.500h13M.5 10.500h13M5 .5v3M9 .5v3M5 10.500v3M9 10.500v3" />
          <path d="M2.500 7h9M4.500 5l-2 2 2 2M9.500 5l2 2-2 2" stroke="#3c76b8" />
        </svg>
      </button>
    </div>
    <div className="flex h-[21px] items-center text-[13px]">
      <button aria-label="Bold" className={clsx(toolButton, 'font-bold')}>B</button>
      <button aria-label="Italic" className={clsx(toolButton, "font-['Liberation_Serif',serif] text-sm font-bold italic")}>I</button>
      <button aria-label="Center" className={toolButton}>
        <svg width="13" height="10" viewBox="0 0 13 10" stroke="#666"><path d="M0 .5h13M2 3.500h9M0 6.500h13M2 9.500h9" /></svg>
      </button>
      <button aria-label="Fill color" className={toolButton}>
        <svg width="15" height="14" viewBox="0 0 15 14">
          <path d="m1.500 5.500 5-4.500 5 4.500-5 4.500z" fill="#fff" stroke="#666" />
          <path d="M4 3V0h2.500v2" fill="none" stroke="#eab768" />
          <path d="M11 3c3 1 3.500 3 3 6l-2-2z" fill="#3c76b8" />
          <path d="M0 11h14v3H0z" fill="#ffff00" />
        </svg>
      </button>
      <button aria-label="Fill color options" className={caretButton}><CaretDown /></button>
      <button aria-label="Font color" className={clsx(toolButton, 'h-[15px] items-start')}>
        <span className="w-3.5 border-b-[3px] border-[#ff0000] text-xs font-bold leading-3">A</span>
      </button>
      <button aria-label="Font color options" className={caretButton}><CaretDown /></button>
      <button aria-label="Borders" className={toolButton}>
        <svg width="13" height="13" viewBox="0 0 13 13" fill="none" stroke="#777"><path d="M.5.5h12v11M.5.5v11M6.500.5v11M.5 6h12" strokeDasharray="1 1" /><path d="M0 12h13" strokeWidth="1.500" /></svg>
      </button>
      <button aria-label="Border options" className={caretButton}><CaretDown /></button>
      <button aria-label="Increase decimal" className={clsx(toolButton, 'flex-col text-[8px] leading-[8px]')}>
        <span className="flex items-center"><svg width="6" height="5" viewBox="0 0 6 5" fill="none" stroke="#3c76b8"><path d="M6 2.500H1M3 .5l-2 2 2 2" /></svg>.0</span>
        <span>.00</span>
      </button>
      <button aria-label="Decrease decimal" className={clsx(toolButton, 'flex-col text-[8px] leading-[8px]')}>
        <span>.00</span>
        <span className="flex items-center"><svg width="6" height="5" viewBox="0 0 6 5" fill="none" stroke="#3c76b8"><path d="M0 2.500h5M3 .5l2 2-2 2" /></svg>.0</span>
      </button>
      <button aria-label="Format painter" className={toolButton}>
        <svg width="14" height="13" viewBox="0 0 14 13">
          <path d="m0 8 5-4 5 5-5 4z" fill="#eab768" />
          <path d="m4.500 4 2-1.500L9 4.500 12 .5l2 1.500-3 4 1 2-2 1.500z" fill="#555" />
        </svg>
      </button>
    </div>
  </div>
);

/* ---------- Callouts drawn over the window ---------- */

const Callouts = () => (
  <>
    <svg width="26" height="90" viewBox="0 0 26 90" className="pointer-events-none absolute left-0 top-[335px] drop-shadow-[1px_2px_1px_rgba(0,0,0,0.35)]">
      <ellipse cx="13" cy="45" rx="11" ry="41" fill="none" stroke="#f04545" strokeWidth="2" />
    </svg>
    <div className="pointer-events-none absolute left-[83px] top-[238px] h-[30px] w-[125px] border-2 border-[#f04040] shadow-[1px_2px_3px_rgba(0,0,0,0.5),inset_1px_2px_3px_rgba(0,0,0,0.4)]" />
    <svg width="80" height="96" viewBox="0 0 80 96" className="pointer-events-none absolute left-[62px] top-[152px] drop-shadow-[2px_2px_2px_rgba(0,0,0,0.4)]">
      <path d="M5 7.500 12.500 1 56 54l6-4 7 33-28-16 8-5z" fill="#fc4141" />
    </svg>
    <svg width="12" height="19" viewBox="0 0 12 19" className="pointer-events-none absolute left-[167px] top-[242px]">
      <path d="M.5 1v14l3.300-3 2.400 5.500 2.500-1-2.400-5.500H11z" fill="#fff" stroke="#222" />
    </svg>
  </>
);

const App: React.FC = () => {
  return (
    <div className="relative flex h-screen w-full flex-col overflow-hidden border border-[#217346] bg-[#217346] font-['Open_Sans','Noto_Sans',sans-serif]">
      <TitleBar />
      <RibbonTabs />
      <Ribbon />
      <FormulaBar />
      <main className="flex min-h-0 flex-1">
        <Sheet />
        <VerticalScroll />
      </main>
      <SheetTabs />
      <StatusBar />
      <ContextMenu />
      <MiniToolbar />
      <Callouts />
    </div>
  );
};

export default App;
